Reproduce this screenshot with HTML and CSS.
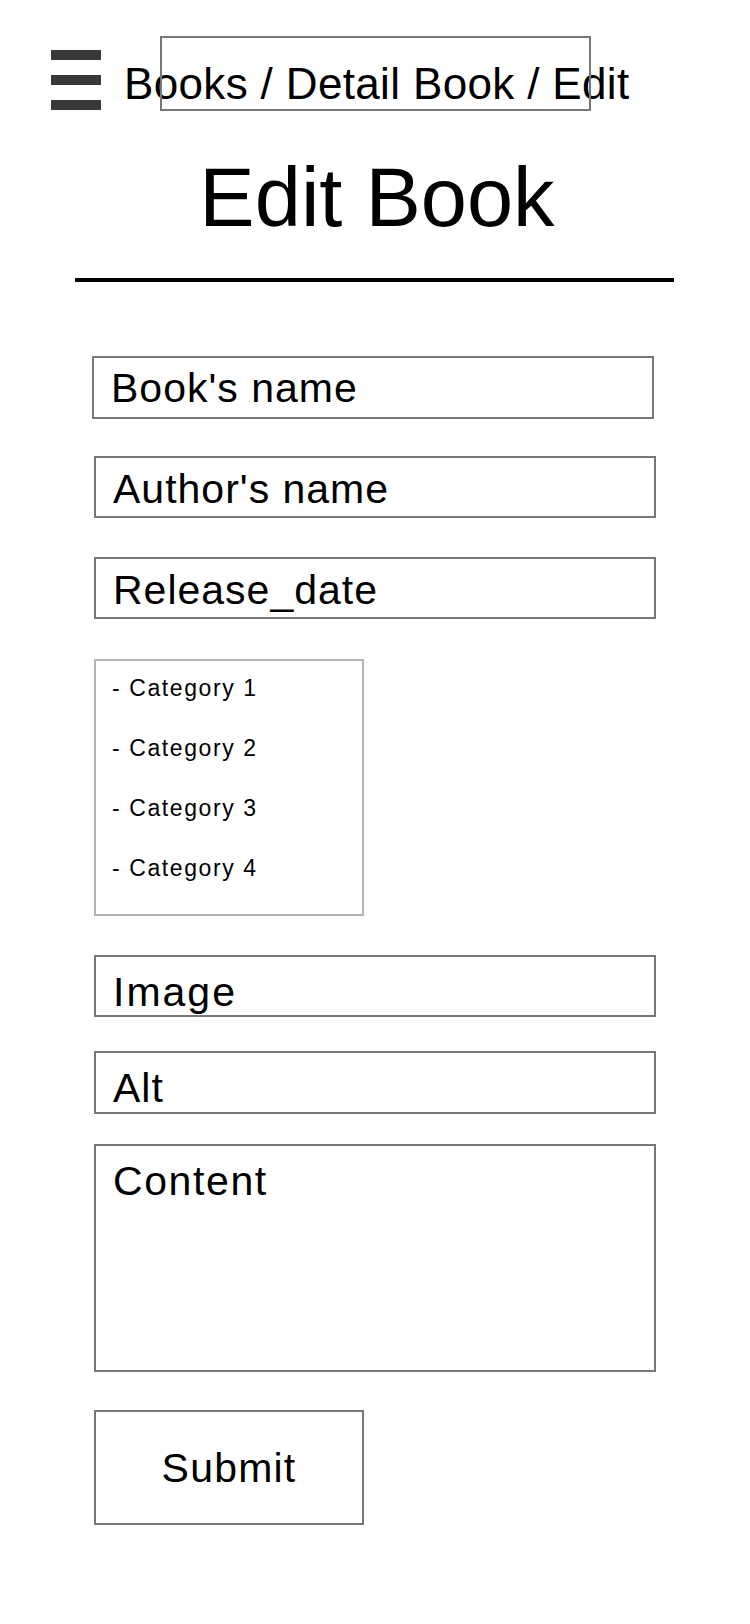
FILE: index.html
```html
<!DOCTYPE html>
<html lang="en">
<head>
<meta charset="utf-8">
<title>Edit Book</title>
<link rel="stylesheet" href="styles.css">
</head>
<body>
<header class="topbar">
  <div class="burger" aria-label="Menu">
    <span class="burger__bar"></span>
    <span class="burger__bar"></span>
    <span class="burger__bar"></span>
  </div>
  <nav class="crumbs">Books / Detail Book / Edit</nav>
  <div class="crumbs-frame"></div>
</header>

<main class="page">
  <h1 class="title">Edit Book</h1>
  <hr class="divider">

  <form class="form">
    <div class="field field--first">Book's name</div>
    <div class="field field--author">Author's name</div>
    <div class="field field--date">Release_date</div>
    <div class="cats">
      <ul class="cats__list">
        <li class="cats__item">- Category 1</li>
        <li class="cats__item">- Category 2</li>
        <li class="cats__item">- Category 3</li>
        <li class="cats__item">- Category 4</li>
      </ul>
    </div>
    <div class="field field--image">Image</div>
    <div class="field field--alt">Alt</div>
    <div class="field field--content">Content</div>
    <div class="submit">Submit</div>
  </form>
</main>
</body>
</html>
```

FILE: styles.css
```css
* {
  box-sizing: border-box;
}

html, body {
  margin: 0;
  padding: 0;
  background: #fff;
}

body {
  font-family: "Liberation Sans", Arial, sans-serif;
  color: #000;
  width: 750px;
}

/* ---------- top bar ---------- */
.topbar {
  position: relative;
  display: flex;
  align-items: flex-start;
  padding: 50px 0 0 51px;
  height: 110px;
}

.burger {
  display: flex;
  flex-direction: column;
  gap: 15px;
  width: 50px;
}

.burger__bar {
  display: block;
  height: 10px;
  background: #383838;
}

.crumbs {
  margin: 4px 0 0 23px;
  font-size: 44px;
  line-height: 60px;
  letter-spacing: 0.35px;
  white-space: nowrap;
}

.crumbs-frame {
  position: absolute;
  left: 160px;
  top: 36px;
  width: 431px;
  height: 75px;
  border: 2px solid #777;
  pointer-events: none;
}

/* ---------- title ---------- */
.page {
  display: flex;
  flex-direction: column;
}

.title {
  margin: 47px 0 0 0;
  padding-left: 4px;
  font-size: 83px;
  font-weight: 400;
  line-height: 81px;
  text-align: center;
}

.divider {
  margin: 40px 0 0 75px;
  width: 599px;
  height: 4px;
  border: 0;
  background: #000;
}

/* ---------- form ---------- */
.form {
  display: flex;
  flex-direction: column;
  align-items: flex-start;
  padding: 74px 0 120px 94px;
}

.field {
  width: 562px;
  height: 62px;
  border: 2px solid #777;
  padding: 11px 0 0 17px;
  font-size: 41px;
  line-height: 41px;
  letter-spacing: 1px;
  white-space: nowrap;
  overflow: hidden;
}

.field--first {
  margin-left: -2px;
  height: 63px;
  padding-top: 10px;
}

.field--author {
  margin-top: 37px;
}

.field--date {
  margin-top: 39px;
}

.field--image {
  margin-top: 39px;
  padding-top: 15px;
  letter-spacing: 2px;
}

.field--alt {
  margin-top: 34px;
  height: 63px;
  padding-top: 15px;
}

.field--content {
  margin-top: 30px;
  height: 228px;
  padding-top: 15px;
  letter-spacing: 1.6px;
}

/* categories */
.cats {
  margin-top: 40px;
  width: 270px;
  height: 257px;
  border: 2px solid #b3b3b3;
  padding: 0 0 0 16px;
}

.cats__list {
  list-style: none;
  margin: -3px 0 0 0;
  padding: 0;
}

.cats__item {
  font-size: 23px;
  line-height: 60px;
  letter-spacing: 1.6px;
  white-space: nowrap;
}

/* submit */
.submit {
  margin-top: 38px;
  width: 270px;
  height: 115px;
  border: 2px solid #777;
  display: flex;
  align-items: center;
  justify-content: center;
  padding-top: 2px;
  font-size: 41px;
  line-height: 41px;
  letter-spacing: 1.2px;
}
```
